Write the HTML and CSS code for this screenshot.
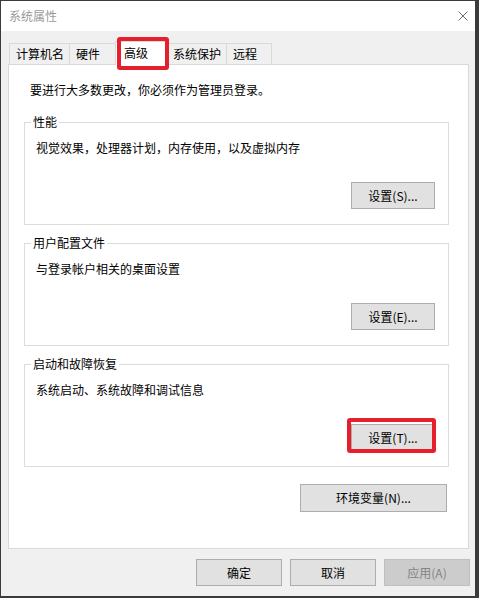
FILE: index.html
```html
<!DOCTYPE html>
<html lang="zh-CN">
<head>
<meta charset="utf-8">
<title>系统属性</title>
<link rel="stylesheet" href="styles.css">
</head>
<body>
<div class="window">
  <div class="titlebar">
    <span class="title">系统属性</span>
    <svg class="close" viewBox="0 0 10 10" width="10" height="10"><path d="M0.5 0.5 L9.5 9.5 M9.5 0.5 L0.5 9.5" stroke="#6f6f6f" stroke-width="1" fill="none"/></svg>
  </div>
  <div class="main">
    <div class="tabs">
      <div class="tab">计算机名</div>
      <div class="tab">硬件</div>
      <div class="tab active">高级<span class="mark mark-tab"></span></div>
      <div class="tab">系统保护</div>
      <div class="tab last">远程</div>
    </div>
    <div class="panel">
      <p class="intro">要进行大多数更改，你必须作为管理员登录。</p>
      <fieldset class="group">
        <legend>性能</legend>
        <p class="desc">视觉效果，处理器计划，内存使用，以及虚拟内存</p>
        <div class="group-actions"><button class="btn">设置(S)...</button></div>
      </fieldset>
      <fieldset class="group">
        <legend>用户配置文件</legend>
        <p class="desc">与登录帐户相关的桌面设置</p>
        <div class="group-actions"><button class="btn">设置(E)...</button></div>
      </fieldset>
      <fieldset class="group">
        <legend>启动和故障恢复</legend>
        <p class="desc">系统启动、系统故障和调试信息</p>
        <div class="group-actions"><span class="marked"><button class="btn">设置(T)...</button><span class="mark mark-btn"></span></span></div>
      </fieldset>
      <div class="env-row"><button class="btn env">环境变量(N)...</button></div>
    </div>
    <div class="actions">
      <button class="btn wide">确定</button>
      <button class="btn wide">取消</button>
      <button class="btn wide disabled">应用(A)</button>
    </div>
  </div>
</div>
</body>
</html>
```
FILE: styles.css
```css
* { box-sizing: border-box; }
body {
  margin: 0;
  background: #3b3b3b;
  font-family: "Microsoft YaHei UI", "Noto Sans CJK SC", sans-serif;
  font-size: 12px;
  color: #000;
}
.window {
  width: 474px;
  height: 595px;
  margin: 1px 0 0 1px;
  background: #f0f0f0;
  display: flex;
  flex-direction: column;
}
.titlebar {
  height: 30px;
  background: #fff;
  display: flex;
  align-items: center;
  justify-content: space-between;
  padding: 0 7px 0 8px;
}
.title { color: #9a9a9a; line-height: 16px; }
.close { display: block; }
.main {
  flex: 1;
  display: flex;
  flex-direction: column;
  padding: 12px 5px 0 7px;
}
.tabs {
  display: flex;
  align-items: flex-end;
  height: 21px;
  margin-left: 1px;
  position: relative;
  z-index: 1;
}
.tab {
  height: 21px;
  min-width: 46px;
  border-top: 1px solid #d9d9d9;
  border-left: 1px solid #d9d9d9;
  padding: 0 5px 0 6px;
  line-height: 20px;
  background: #f0f0f0;
  white-space: nowrap;
}
.tab.last { border-right: 1px solid #d9d9d9; }
.tab.active {
  position: relative;
  z-index: 2;
  height: 24px;
  width: 53px;
  margin: 0 -2px -1px 0;
  padding-left: 8px;
  line-height: 22px;
  background: #fff;
  border-right: 1px solid #d9d9d9;
}
.mark {
  position: absolute;
  border: 4px solid #e51f2b;
  border-radius: 3px;
  pointer-events: none;
}
.mark-tab { left: 1px; top: -5px; width: 52px; height: 33px; }
.marked { position: relative; display: inline-flex; }
.mark-btn { left: -4px; top: -6px; width: 89px; height: 35px; }
.panel {
  width: 461px;
  height: 485px;
  background: #fff;
  border: 1px solid #d9d9d9;
  padding: 0 19px 0 15px;
}
.intro { margin: 17px 0 0 6px; line-height: 16px; }
.group {
  margin: 16px 0 0;
  padding: 0 13px 15px 6px;
  border: 1px solid #dcdcdc;
  min-width: 0;
}
.group + .group { margin-top: 10px; }
.group legend { padding: 0 2px; line-height: 16px; }
.desc { margin: 10px 0 0 5px; line-height: 16px; }
.group-actions {
  display: flex;
  justify-content: flex-end;
  margin-top: 26px;
}
.btn {
  width: 84px;
  height: 27px;
  padding: 0;
  background: #e1e1e1;
  border: 1px solid #adadad;
  font: inherit;
  color: #000;
  line-height: 16px;
}
.env-row {
  display: flex;
  justify-content: flex-end;
  margin-top: 17px;
  padding-right: 2px;
}
.btn.env { width: 147px; height: 28px; }
.actions {
  display: flex;
  justify-content: flex-end;
  gap: 8px;
  margin-top: 10px;
}
.btn.wide { width: 86px; }
.btn.disabled { background: #cccccc; border-color: #bfbfbf; color: #838383; }
```
